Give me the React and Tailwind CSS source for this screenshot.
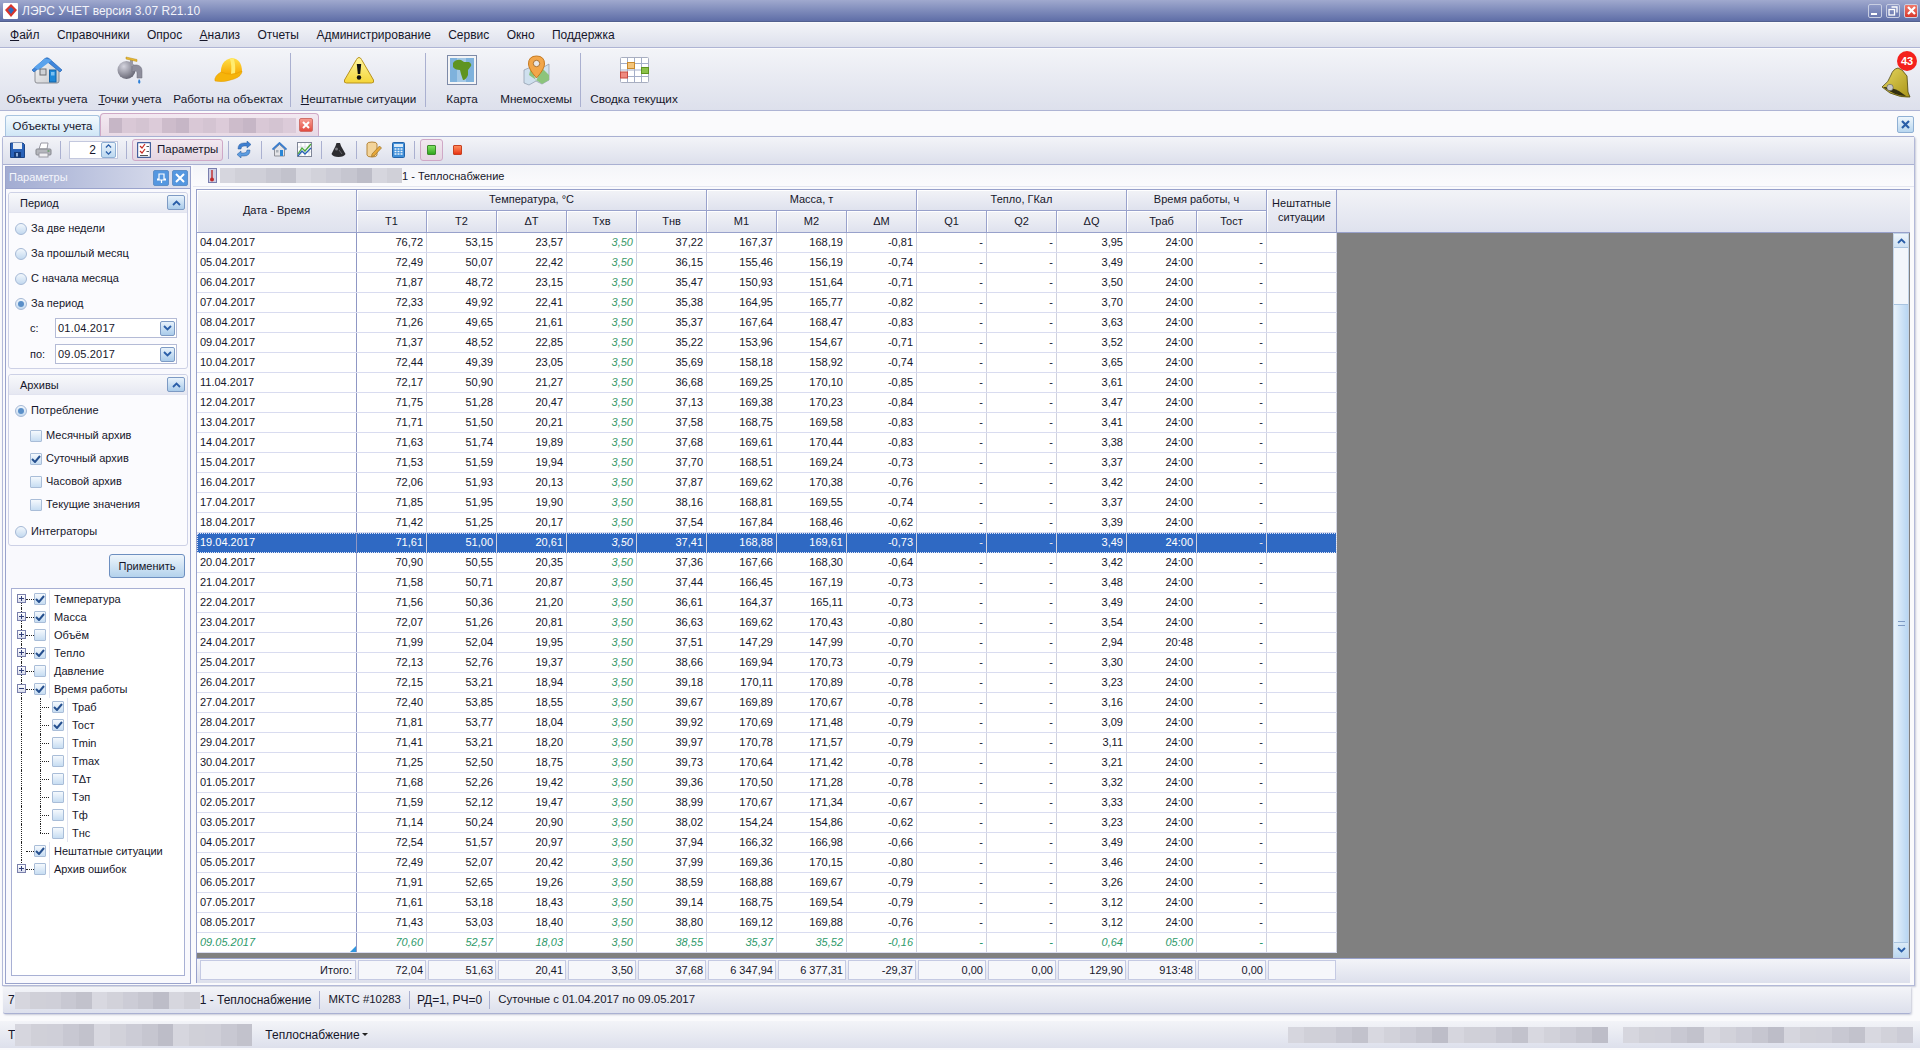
import React from 'react';

const rows = `04.04.2017 76,72 53,15 23,57 3,50 37,22 167,37 168,19 -0,81 - - 3,95 24:00 -
05.04.2017 72,49 50,07 22,42 3,50 36,15 155,46 156,19 -0,74 - - 3,49 24:00 -
06.04.2017 71,87 48,72 23,15 3,50 35,47 150,93 151,64 -0,71 - - 3,50 24:00 -
07.04.2017 72,33 49,92 22,41 3,50 35,38 164,95 165,77 -0,82 - - 3,70 24:00 -
08.04.2017 71,26 49,65 21,61 3,50 35,37 167,64 168,47 -0,83 - - 3,63 24:00 -
09.04.2017 71,37 48,52 22,85 3,50 35,22 153,96 154,67 -0,71 - - 3,52 24:00 -
10.04.2017 72,44 49,39 23,05 3,50 35,69 158,18 158,92 -0,74 - - 3,65 24:00 -
11.04.2017 72,17 50,90 21,27 3,50 36,68 169,25 170,10 -0,85 - - 3,61 24:00 -
12.04.2017 71,75 51,28 20,47 3,50 37,13 169,38 170,23 -0,84 - - 3,47 24:00 -
13.04.2017 71,71 51,50 20,21 3,50 37,58 168,75 169,58 -0,83 - - 3,41 24:00 -
14.04.2017 71,63 51,74 19,89 3,50 37,68 169,61 170,44 -0,83 - - 3,38 24:00 -
15.04.2017 71,53 51,59 19,94 3,50 37,70 168,51 169,24 -0,73 - - 3,37 24:00 -
16.04.2017 72,06 51,93 20,13 3,50 37,87 169,62 170,38 -0,76 - - 3,42 24:00 -
17.04.2017 71,85 51,95 19,90 3,50 38,16 168,81 169,55 -0,74 - - 3,37 24:00 -
18.04.2017 71,42 51,25 20,17 3,50 37,54 167,84 168,46 -0,62 - - 3,39 24:00 -
19.04.2017 71,61 51,00 20,61 3,50 37,41 168,88 169,61 -0,73 - - 3,49 24:00 -
20.04.2017 70,90 50,55 20,35 3,50 37,36 167,66 168,30 -0,64 - - 3,42 24:00 -
21.04.2017 71,58 50,71 20,87 3,50 37,44 166,45 167,19 -0,73 - - 3,48 24:00 -
22.04.2017 71,56 50,36 21,20 3,50 36,61 164,37 165,11 -0,73 - - 3,49 24:00 -
23.04.2017 72,07 51,26 20,81 3,50 36,63 169,62 170,43 -0,80 - - 3,54 24:00 -
24.04.2017 71,99 52,04 19,95 3,50 37,51 147,29 147,99 -0,70 - - 2,94 20:48 -
25.04.2017 72,13 52,76 19,37 3,50 38,66 169,94 170,73 -0,79 - - 3,30 24:00 -
26.04.2017 72,15 53,21 18,94 3,50 39,18 170,11 170,89 -0,78 - - 3,23 24:00 -
27.04.2017 72,40 53,85 18,55 3,50 39,67 169,89 170,67 -0,78 - - 3,16 24:00 -
28.04.2017 71,81 53,77 18,04 3,50 39,92 170,69 171,48 -0,79 - - 3,09 24:00 -
29.04.2017 71,41 53,21 18,20 3,50 39,97 170,78 171,57 -0,79 - - 3,11 24:00 -
30.04.2017 71,25 52,50 18,75 3,50 39,73 170,64 171,42 -0,78 - - 3,21 24:00 -
01.05.2017 71,68 52,26 19,42 3,50 39,36 170,50 171,28 -0,78 - - 3,32 24:00 -
02.05.2017 71,59 52,12 19,47 3,50 38,99 170,67 171,34 -0,67 - - 3,33 24:00 -
03.05.2017 71,14 50,24 20,90 3,50 38,02 154,24 154,86 -0,62 - - 3,23 24:00 -
04.05.2017 72,54 51,57 20,97 3,50 37,94 166,32 166,98 -0,66 - - 3,49 24:00 -
05.05.2017 72,49 52,07 20,42 3,50 37,99 169,36 170,15 -0,80 - - 3,46 24:00 -
06.05.2017 71,91 52,65 19,26 3,50 38,59 168,88 169,67 -0,79 - - 3,26 24:00 -
07.05.2017 71,61 53,18 18,43 3,50 39,14 168,75 169,54 -0,79 - - 3,12 24:00 -
08.05.2017 71,43 53,03 18,40 3,50 38,80 169,12 169,88 -0,76 - - 3,12 24:00 -
09.05.2017 70,60 52,57 18,03 3,50 38,55 35,37 35,52 -0,16 - - 0,64 05:00 -`
  .split('\n')
  .map((line) => line.split(' '));

const totals = ['72,04', '51,63', '20,41', '3,50', '37,68', '6 347,94', '6 377,31', '-29,37', '0,00', '0,00', '129,90', '913:48', '0,00', ''];

const cols = 'grid grid-cols-[160px_repeat(14,70px)]';
const bar = 'bg-gradient-to-b from-[#f3f4f8] to-[#dde0ec]';
const headCell = 'flex items-center justify-center text-center bg-gradient-to-b from-[#f2f3f7] to-[#dfe2ee] border-r border-b border-[#98a1cb] shadow-[inset_1px_1px_0_#fff]';

const greys = [
  'bg-[#d0d0d8]', 'bg-[#c2c2cc]', 'bg-[#ccccd6]', 'bg-[#d6d6de]', 'bg-[#c8c8d2]',
  'bg-[#d2d2da]', 'bg-[#bdbdc8]', 'bg-[#cfcfd8]', 'bg-[#d8d8e0]', 'bg-[#c6c6d0]',
];
const pinks = ['bg-[#d9c8d6]', 'bg-[#cdbccb]', 'bg-[#d4c4d2]', 'bg-[#c6b6c6]', 'bg-[#dccbd9]'];

function Blur({ className, cells = 12, palette = greys }) {
  return (
    <div className={`flex shrink-0 ${className}`}>
      {Array.from({ length: cells }, (_, i) => (
        <div key={i} className={`flex-1 ${palette[(i * 7 + 3) % palette.length]}`} />
      ))}
    </div>
  );
}

function Sep({ h = 'h-[50px]' }) {
  return <div className={`w-px shrink-0 bg-[#aab0d0] ${h}`} />;
}

function HouseIcon() {
  return (
    <svg width="32" height="27" viewBox="0 0 32 27">
      <defs>
        <linearGradient id="wallg" x1="0" y1="0" x2="1" y2="1">
          <stop offset="0" stopColor="#fafafa" />
          <stop offset="1" stopColor="#c4c6ca" />
        </linearGradient>
      </defs>
      <path d="M4 13 L16 3 L28 13 V24 Q28 26 26 26 H6 Q4 26 4 24Z" fill="url(#wallg)" stroke="#8c8e94" />
      <path d="M1 13 L14 1.500 Q16 0 18 1.500 L31 13 L29 15 L16 4.500 L3 15Z" fill="#3f86dc" stroke="#2565b5" strokeWidth="0.7" />
      <path d="M3 10.500 L14 1.500 L21 3 L8 13Z" fill="#5aa3ec" />
      <rect x="9" y="12" width="6" height="6" fill="#cfd2d6" stroke="#6f7175" />
      <rect x="18.500" y="13" width="6.500" height="12" fill="#1e88d8" stroke="#1565a8" />
      <rect x="20" y="15" width="3.500" height="3.500" fill="#7cc0f0" />
    </svg>
  );
}

function TapIcon() {
  return (
    <svg width="26" height="28" viewBox="0 0 26 28">
      <defs>
        <radialGradient id="tapg" cx="0.35" cy="0.3" r="0.8">
          <stop offset="0" stopColor="#d4d4de" />
          <stop offset="1" stopColor="#5d5d6b" />
        </radialGradient>
      </defs>
      <circle cx="9.500" cy="14" r="9" fill="url(#tapg)" />
      <path d="M15 9 H20 Q25 10 25 15 V22 H20 V16 Q19 14 15 16Z" fill="#8e8e9c" stroke="#6d6d7a" strokeWidth="0.5" />
      <rect x="13" y="4" width="3" height="6" fill="#9a9aa6" />
      <path d="M9 1 L20 3.500 L20 5.500 L9 3Z" fill="#e8b830" stroke="#b58a1a" strokeWidth="0.5" />
      <path d="M22 23 Q24.500 25.500 22.500 27.800 Q20 27 22 23Z" fill="#2c7fd8" />
    </svg>
  );
}

function HatIcon() {
  return (
    <svg width="29" height="26" viewBox="0 0 29 26">
      <defs>
        <linearGradient id="hatg" x1="0" y1="0" x2="0" y2="1">
          <stop offset="0" stopColor="#ffe04a" />
          <stop offset="1" stopColor="#f7a800" />
        </linearGradient>
      </defs>
      <path d="M7 17 Q6 3 18 1 Q28 2 28 15 Q22 19 7 17Z" fill="url(#hatg)" />
      <path d="M16 2 Q18 8 17 17 L21 16.500 Q22 8 19.500 1.200Z" fill="#ffec70" />
      <path d="M1 24 Q0 19 7 15 Q18 20 28 14 Q28 19 20 22 Q10 26 1 24Z" fill="#f6b40a" stroke="#e09a00" strokeWidth="0.5" />
    </svg>
  );
}

function WarnIcon() {
  return (
    <svg width="32" height="28" viewBox="0 0 32 28">
      <defs>
        <linearGradient id="warng" x1="0" y1="0" x2="0" y2="1">
          <stop offset="0" stopColor="#fff7a0" />
          <stop offset="1" stopColor="#f5d538" />
        </linearGradient>
      </defs>
      <path d="M16 1.500 Q17.500 1.500 18.500 3.500 L30.500 24 Q31.500 27 28.500 27 H3.500 Q0.500 27 1.500 24 L13.500 3.500 Q14.500 1.500 16 1.500Z" fill="url(#warng)" stroke="#b8921e" />
      <path d="M13.800 8 H18.200 L17.200 18 H14.800Z" fill="#111" />
      <circle cx="16" cy="21.500" r="2.200" fill="#111" />
    </svg>
  );
}

function MapIcon() {
  return (
    <svg width="30" height="30" viewBox="0 0 30 30">
      <rect x="0.500" y="0.500" width="29" height="29" fill="#f3f4f6" stroke="#7d8aa8" />
      <rect x="3" y="3" width="24" height="24" fill="#7fb2dc" />
      <rect x="10" y="3" width="9" height="24" fill="#a3c8e6" />
      <path d="M6 8 Q9 4 14 5 L17 7 L22 7 Q25 9 24 11 L21 15 L21 20 Q19 25 16 25 L14 19 L13 15 Q8 15 6 12Z" fill="#5f9420" />
    </svg>
  );
}

function PinIcon() {
  return (
    <svg width="27" height="31" viewBox="0 0 27 31">
      <path d="M1 15 L8 12 L19 13 L26 9 V25 L19 29 L13 26 L6 30 L1 28Z" fill="#cfe0ee" stroke="#8b97a8" strokeWidth="0.7" />
      <path d="M8 12 L13 26 L19 13 L26 20 V25 L19 29 L6 20Z" fill="#8cc47c" />
      <path d="M13.500 1 Q21.500 1 21.500 9 Q21.500 14 13.500 23 Q5.500 14 5.500 9 Q5.500 1 13.500 1Z" fill="#f2a64a" stroke="#c67a20" />
      <circle cx="13.500" cy="8.500" r="3.200" fill="#e8e8ea" stroke="#aa7030" />
    </svg>
  );
}

function GridIcon() {
  return (
    <svg width="29" height="26" viewBox="0 0 29 26">
      <rect x="0.500" y="0.500" width="28" height="25" rx="1" fill="#fff" stroke="#a8aec0" />
      <path d="M7.500 1 V25 M14.500 1 V25 M21.500 1 V25 M1 6.500 H28 M1 13 H28 M1 19.500 H28" stroke="#a4aec8" />
      <rect x="7.500" y="5.500" width="7" height="6" fill="#f4c47a" stroke="#c98a2c" />
      <rect x="21.500" y="10.500" width="7" height="6" fill="#8cc24a" stroke="#5f9420" />
      <rect x="0.500" y="15" width="7" height="6" fill="#ee8a80" stroke="#c84a40" />
    </svg>
  );
}

function BellIcon() {
  return (
    <svg width="30" height="32" viewBox="0 0 30 32">
      <defs>
        <linearGradient id="bellg" x1="0" y1="0" x2="1" y2="1">
          <stop offset="0" stopColor="#e8d860" />
          <stop offset="1" stopColor="#a89418" />
        </linearGradient>
      </defs>
      <path d="M17 2 L21 4 L26 10 L27 26 L29 31 Q20 32 9 27 L1 21 Q8 16 10 9 Q12 3 17 2Z" fill="url(#bellg)" stroke="#4e460c" strokeWidth="0.8" />
      <path d="M2 21 Q10 21 18 25 L25 30 Q14 30 2 21Z" fill="#332f10" />
      <circle cx="9" cy="21.500" r="3.200" fill="#c8c8c8" stroke="#444" strokeWidth="0.5" />
    </svg>
  );
}

function SaveIcon() {
  return (
    <svg width="15" height="16" viewBox="0 0 15 16">
      <path d="M0.500 1 H13 L14.500 2.500 V15.500 H0.500Z" fill="#2a62b8" stroke="#1c4688" />
      <rect x="3" y="1" width="9" height="6" fill="#e8eef6" />
      <rect x="4" y="10" width="7" height="5.500" fill="#163a78" />
      <rect x="6" y="11" width="2" height="3.500" fill="#8fb0dc" />
    </svg>
  );
}

function PrintIcon() {
  return (
    <svg width="17" height="16" viewBox="0 0 17 16">
      <path d="M4 7 L6 1 H13 L12 7Z" fill="#fff" stroke="#9a9aa4" />
      <rect x="1" y="7" width="15" height="6" rx="1" fill="#b4b6bc" stroke="#85878e" />
      <rect x="4" y="11" width="9" height="4" fill="#efeff2" stroke="#9a9aa4" />
      <rect x="12.500" y="8.500" width="2" height="1" fill="#3c8a3c" />
    </svg>
  );
}

function ParamsIcon() {
  return (
    <svg width="14" height="16" viewBox="0 0 14 16">
      <rect x="0.500" y="0.500" width="13" height="15" rx="1" fill="#fff" stroke="#44609c" strokeWidth="1.400" />
      <path d="M3 4 L5 6 L8 2 M3 9 L5 11 L8 7" stroke="#c42a22" strokeWidth="1.200" fill="none" />
      <path d="M9.500 4.500 H12 M9.500 9.500 H12 M3 13.500 H11" stroke="#555" />
    </svg>
  );
}

function RefreshIcon() {
  return (
    <svg width="16" height="17" viewBox="0 0 16 17">
      <path d="M2 8 Q2 2 8 2 L11 2 L11 0 L15 3.500 L11 7 L11 5 L8 5 Q5 5 5 8Z" fill="#3f7fd0" stroke="#24589c" strokeWidth="0.5" />
      <path d="M14 9 Q14 15 8 15 L5 15 L5 17 L1 13.500 L5 10 L5 12 L8 12 Q11 12 11 9Z" fill="#5c9ce0" stroke="#24589c" strokeWidth="0.5" />
    </svg>
  );
}

function SmallHome() {
  return (
    <svg width="15" height="15" viewBox="0 0 15 15">
      <path d="M2.500 7 L7.500 2.500 L12.500 7 V14 H2.500Z" fill="#e4e4e8" stroke="#8e9098" />
      <path d="M0.500 7.500 L7.500 1 L14.500 7.500" fill="none" stroke="#3a7ccc" strokeWidth="1.800" />
      <rect x="8" y="8" width="3" height="6" fill="#2a86d6" />
      <rect x="4" y="8" width="2.500" height="2.500" fill="#aab0b8" />
    </svg>
  );
}

function ChartIcon() {
  return (
    <svg width="15" height="15" viewBox="0 0 15 15">
      <rect x="0.500" y="0.500" width="14" height="14" fill="#fff" stroke="#7f8698" />
      <path d="M4 1 V14 M8 1 V14 M12 1 V14 M1 5 H14 M1 10 H14" stroke="#c7ccd8" strokeWidth="0.6" />
      <path d="M1 12 L5 6 L8 9 L14 2" fill="none" stroke="#4aa83a" strokeWidth="1.300" />
      <path d="M1 14 L5 9 L8 12 L14 6" fill="none" stroke="#2862b4" strokeWidth="1.300" />
    </svg>
  );
}

function WeightIcon() {
  return (
    <svg width="15" height="15" viewBox="0 0 15 15">
      <path d="M5.500 1 H9 L10 4 L14.500 12 Q13 15 7.500 15 Q2 15 0.500 12 L4.500 4Z" fill="#2c2c30" />
      <circle cx="5.500" cy="7" r="1.500" fill="#77777d" />
      <path d="M8 8 L11 12" stroke="#66666c" />
    </svg>
  );
}

function NoteIcon() {
  return (
    <svg width="16" height="17" viewBox="0 0 16 17">
      <path d="M1 3 Q1 1 6 1 Q11 1 11 3 V14 Q11 16 6 16 Q1 16 1 14Z" fill="#f3d49a" stroke="#b5853a" />
      <path d="M6 13 L13.500 5 L15.500 7 L8 15 L5.500 15.500Z" fill="#e8a838" stroke="#8c6420" strokeWidth="0.6" />
    </svg>
  );
}

function CalcIcon() {
  return (
    <svg width="13" height="16" viewBox="0 0 13 16">
      <rect x="0.500" y="0.500" width="12" height="15" rx="1" fill="#3f8ed8" stroke="#2262a8" />
      <rect x="2" y="2" width="9" height="3" fill="#d8eaf8" />
      <path d="M2.500 7 H4.500 M5.500 7 H7.500 M8.500 7 H10.500 M2.500 9.500 H4.500 M5.500 9.500 H7.500 M8.500 9.500 H10.500 M2.500 12 H4.500 M5.500 12 H7.500 M8.500 12 H10.500" stroke="#eef6fc" strokeWidth="1.400" />
    </svg>
  );
}

function Chevron({ up, className = '' }) {
  return (
    <svg width="9" height="6" viewBox="0 0 9 6" className={className}>
      <path d={up ? 'M1 5 L4.500 1.500 L8 5' : 'M1 1 L4.500 4.500 L8 1'} fill="none" stroke="#2a5ea8" strokeWidth="1.800" />
    </svg>
  );
}

function ToolButton({ icon, w, children }) {
  return (
    <div className={`flex flex-col items-center shrink-0 ${w}`}>
      <div className="h-[38px] flex items-center justify-center">{icon}</div>
      <div className="mt-[2px] whitespace-nowrap text-[11.700px] leading-[16px]">{children}</div>
    </div>
  );
}

function WinButton({ color, children }) {
  return (
    <div className={`w-[14px] h-[14px] rounded-[2px] border border-[#c8cee2] flex items-center justify-center ${color}`}>
      {children}
    </div>
  );
}

function Radio({ on, children }) {
  return (
    <div className="flex items-center gap-[4px] h-[25px]">
      <div className="w-[12px] h-[12px] rounded-full border border-[#a5b9d6] bg-gradient-to-b from-[#f2f7fc] to-[#c3d9ef] flex items-center justify-center">
        {on && <div className="w-[6px] h-[6px] rounded-full bg-[#5a8fc8]" />}
      </div>
      <span>{children}</span>
    </div>
  );
}

function Box({ on }) {
  return (
    <div className="w-[12px] h-[12px] shrink-0 rounded-[1px] border border-[#a9bdd8] bg-gradient-to-b from-[#f5f9fd] to-[#c7ddf2] flex items-center justify-center">
      {on && (
        <svg width="10" height="8" viewBox="0 0 10 8">
          <path d="M1 4 L4 7 L9 1" fill="none" stroke="#26508f" strokeWidth="2" />
        </svg>
      )}
    </div>
  );
}

function CheckRow({ on, children }) {
  return (
    <div className="flex items-center gap-[4px] h-[23px] pl-[15px]">
      <Box on={on} />
      <span>{children}</span>
    </div>
  );
}

function GroupHead({ children }) {
  return (
    <div className="h-[20px] flex items-center justify-between pl-[11px] pr-[2px] bg-gradient-to-b from-[#f8f9fb] to-[#e6e8f2] border-b border-[#e2e4f0] rounded-t-[3px]">
      <span className="pt-px">{children}</span>
      <div className="w-[18px] h-[15px] rounded-[2px] border border-[#7d9ac4] bg-gradient-to-b from-[#e8f2fb] to-[#a9cbea] flex items-center justify-center">
        <Chevron up />
      </div>
    </div>
  );
}

function DateInput({ label, value }) {
  return (
    <div className="flex items-center h-[20px] pl-[21px]">
      <span className="w-[25px]">{label}</span>
      <div className="w-[122px] h-[20px] bg-white border border-[#b4bbd6] flex items-center justify-between pl-[2px] pr-[1px] tracking-[0.2px]">
        <span>{value}</span>
        <div className="w-[15px] h-[15px] rounded-[2px] border border-[#7d9ac4] bg-gradient-to-b from-[#e8f2fb] to-[#a9cbea] flex items-center justify-center">
          <Chevron />
        </div>
      </div>
    </div>
  );
}

function Expander({ open }) {
  return (
    <div className="absolute left-0 top-[4px] w-[9px] h-[9px] border border-[#7a80ac] bg-gradient-to-b from-white to-[#d8dcec] flex items-center justify-center">
      <div className="relative w-[5px] h-px bg-[#33407a]" />
      {!open && <div className="absolute w-px h-[5px] bg-[#33407a]" />}
    </div>
  );
}

function TreeRow({ label, on, exp, open, first, last, child, lastChild }) {
  return (
    <div className="flex items-center h-[18px] pl-[5px]">
      <div className="relative w-[9px] h-full shrink-0">
        <div className={`absolute left-[4px] border-l border-dotted border-[#222] ${first ? 'top-[9px] bottom-0' : last ? 'top-0 bottom-[9px]' : 'top-0 bottom-0'}`} />
        {exp && <Expander open={open} />}
      </div>
      {child ? (
        <>
          <div className="w-[14px] shrink-0" />
          <div className="relative w-[12px] h-full shrink-0">
            <div className={`absolute left-0 border-l border-dotted border-[#222] ${lastChild ? 'top-0 bottom-[9px]' : 'top-0 bottom-0'}`} />
            <div className="absolute left-0 right-[3px] top-[9px] border-t border-dotted border-[#222]" />
          </div>
        </>
      ) : (
        <div className="w-[8px] h-px shrink-0 border-t border-dotted border-[#222]" />
      )}
      <Box on={on} />
      <div className="w-px h-full bg-[#e0e3f0] ml-[3px] mr-[4px]" />
      <span className="whitespace-nowrap">{label}</span>
    </div>
  );
}

function DataRow({ r }) {
  const selected = r[0] === '19.04.2017';
  const today = r[0] === '09.05.2017';
  const base = selected ? 'bg-[#2f69c3] text-white' : today ? 'bg-white text-[#2f9a6c] italic' : 'bg-white';
  return (
    <div className={`${cols} h-[20px] leading-[19px] ${base} ${selected ? 'outline-1 -outline-offset-1 outline-dotted outline-[#dfe6f6]' : 'border-b border-[#d9dcf0]'}`}>
      {[...r, ''].map((v, i) => {
        const green = i === 4 && !selected;
        return (
          <div
            key={i}
            className={`h-full whitespace-nowrap ${i === 0 ? 'relative pl-[3px] border-r border-[#8f97c4]' : 'text-right pr-[3px] border-r border-[#d0d2e0]'} ${green ? 'italic text-[#3a9a6a]' : ''} ${i === 4 && selected ? 'italic' : ''}`}
          >
            {v}
            {i === 0 && today && (
              <svg width="6" height="6" viewBox="0 0 6 6" className="absolute right-0 bottom-0">
                <path d="M6 0 V6 H0Z" fill="#2f97e0" />
              </svg>
            )}
          </div>
        );
      })}
    </div>
  );
}

export default function App() {
  return (
    <div className="w-[1920px] h-[1050px] overflow-hidden flex flex-col bg-[#fafafc] text-[#16162a] text-[11px] font-['Liberation_Sans',sans-serif]">
      {/* title bar */}
      <div className="h-[22px] shrink-0 flex items-center pl-[3px] pr-[2px] bg-gradient-to-b from-[#a0a9ce] to-[#5f6ea7] border-b border-[#52608f]">
        <div className="w-[15px] h-[16px] bg-white rounded-[1px] flex items-center justify-center">
          <svg width="12" height="13" viewBox="0 0 12 13">
            <path d="M6 0 L12 6 L6 13 L0 6Z" fill="#d8342c" />
            <path d="M6 3 L9 6 L6 10 L3 6Z" fill="#2a6cc0" />
          </svg>
        </div>
        <span className="ml-[4px] text-[#f2f3fa] text-[12px]">ЛЭРС УЧЕТ версия 3.07 R21.10</span>
        <div className="ml-auto flex items-center gap-[4px]">
          <WinButton color="bg-gradient-to-b from-[#8f9ac6] to-[#6b79b0]">
            <div className="w-[6px] h-[2px] bg-white mt-[6px] mr-[3px]" />
          </WinButton>
          <WinButton color="bg-gradient-to-b from-[#8f9ac6] to-[#6b79b0]">
            <svg width="10" height="10" viewBox="0 0 10 10">
              <rect x="1" y="3.500" width="5.500" height="5.500" fill="none" stroke="#fff" strokeWidth="1.300" />
              <path d="M3.500 1 H9 V6.500" fill="none" stroke="#fff" strokeWidth="1.300" />
            </svg>
          </WinButton>
          <WinButton color="bg-gradient-to-b from-[#f0786a] to-[#d8362c]">
            <svg width="9" height="9" viewBox="0 0 9 9">
              <path d="M1 1 L8 8 M8 1 L1 8" stroke="#fff" strokeWidth="2.200" />
            </svg>
          </WinButton>
        </div>
      </div>

      {/* menu */}
      <div className={`mt-px h-[25px] shrink-0 flex items-center gap-[17.400px] pl-[10px] text-[12px] ${bar} border-b border-[#aeb4d4]`}>
        <span><u>Ф</u>айл</span>
        <span>Справочники</span>
        <span>Опрос</span>
        <span><u>А</u>нализ</span>
        <span>Отчеты</span>
        <span>Администрирование</span>
        <span>Сервис</span>
        <span>Окно</span>
        <span>Поддержка</span>
      </div>

      {/* main toolbar */}
      <div className={`relative mt-px h-[62px] shrink-0 flex items-start pt-[2px] pl-[2px] ${bar} border-b border-[#aeb4d4]`}>
        <ToolButton w="w-[90px]" icon={<HouseIcon />}>Объекты учета</ToolButton>
        <ToolButton w="w-[76px]" icon={<TapIcon />}><u>Т</u>очки учета</ToolButton>
        <ToolButton w="w-[120px]" icon={<HatIcon />}>Работы на объектах</ToolButton>
        <div className="mx-[2px] mt-[2px]"><Sep h="h-[54px]" /></div>
        <ToolButton w="w-[131px]" icon={<WarnIcon />}><u>Н</u>ештатные ситуации</ToolButton>
        <div className="mx-[1px] mt-[2px]"><Sep h="h-[54px]" /></div>
        <ToolButton w="w-[70px]" icon={<MapIcon />}>Карта</ToolButton>
        <ToolButton w="w-[78px]" icon={<PinIcon />}>Мнемосхемы</ToolButton>
        <div className="ml-[5px] mr-[1px] mt-[2px]"><Sep h="h-[54px]" /></div>
        <ToolButton w="w-[104px]" icon={<GridIcon />}>Сводка текущих</ToolButton>
        <div className="absolute left-[1881px] top-[17px]"><BellIcon /></div>
        <div className="absolute left-[1897px] top-[2px] w-[20px] h-[20px] rounded-full bg-[#f4201c] text-white text-[11px] font-bold flex items-center justify-center">43</div>
      </div>

      {/* tabs */}
      <div className="mt-px h-[24px] shrink-0 flex items-end pl-[5px] pr-[6px]">
        <div className="h-[21px] w-[95px] flex items-center justify-center pt-px rounded-t-[3px] border border-b-0 border-[#a8c4e0] bg-gradient-to-b from-[#f4fafe] to-[#cfe6f6] text-[11.500px]">
          Объекты учета
        </div>
        <div className="h-[23px] w-[219px] flex items-center pl-[8px] rounded-t-[4px] border border-b-0 border-[#cfa8c6] bg-gradient-to-b from-[#f3e9f1] to-[#e8d9e5]">
          <Blur className="w-[187px] h-[15px]" cells={14} palette={pinks} />
          <div className="ml-[3px] w-[14px] h-[14px] rounded-[2px] border border-[#d0706a] bg-gradient-to-b from-[#f79a90] to-[#e24a40] flex items-center justify-center">
            <svg width="8" height="8" viewBox="0 0 8 8">
              <path d="M1 1 L7 7 M7 1 L1 7" stroke="#fff" strokeWidth="2" />
            </svg>
          </div>
        </div>
        <div className="ml-auto mb-[3px] w-[17px] h-[17px] rounded-[2px] border border-[#8fb0d4] bg-gradient-to-b from-[#eef6fc] to-[#b8d6ef] flex items-center justify-center">
          <svg width="9" height="9" viewBox="0 0 9 9">
            <path d="M1 1 L8 8 M8 1 L1 8" stroke="#2a5ea8" strokeWidth="2.200" />
          </svg>
        </div>
      </div>

      {/* document */}
      <div className="flex-none w-[1913px] ml-[2px] rounded-t-[3px] border-x border-b border-[#b3b9d8] shadow-[1px_1px_2px_#c8cbd8] flex flex-col bg-[#fafafc]">
        {/* doc toolbar */}
        <div className={`h-[29px] shrink-0 flex items-center pl-[7px] pb-[2px] ${bar} border-y border-[#a9b0d2]`}>
          <div className="w-[15px] flex justify-center"><SaveIcon /></div>
          <div className="ml-[10px] w-[17px] flex justify-center"><PrintIcon /></div>
          <div className="ml-[8px]"><Sep h="h-[18px]" /></div>
          <div className="ml-[8px] w-[49px] h-[18px] bg-white border border-[#c3c8de] flex items-center justify-end pr-px">
            <span className="mr-[5px] text-[12px]">2</span>
            <div className="w-[15px] h-[16px] rounded-[2px] border border-[#8fb0d4] bg-gradient-to-b from-[#eaf3fb] to-[#bcd8f0] flex flex-col items-center justify-center gap-[1px]">
              <Chevron up className="scale-75" />
              <Chevron className="scale-75" />
            </div>
          </div>
          <div className="ml-[8px]"><Sep h="h-[18px]" /></div>
          <div className="ml-[5px] w-[91px] h-[22px] rounded-[3px] border border-[#cfa8c6] bg-gradient-to-b from-[#f2e8f0] to-[#e4d6e2] flex items-center pl-[4px] gap-[6px] text-[11.500px]">
            <ParamsIcon />
            <span>Параметры</span>
          </div>
          <div className="ml-[5px]"><Sep h="h-[18px]" /></div>
          <div className="ml-[7px]"><RefreshIcon /></div>
          <div className="ml-[9px]"><Sep h="h-[18px]" /></div>
          <div className="ml-[10px]"><SmallHome /></div>
          <div className="ml-[10px]"><ChartIcon /></div>
          <div className="ml-[9px]"><Sep h="h-[18px]" /></div>
          <div className="ml-[9px]"><WeightIcon /></div>
          <div className="ml-[10px]"><Sep h="h-[18px]" /></div>
          <div className="ml-[9px]"><NoteIcon /></div>
          <div className="ml-[10px]"><CalcIcon /></div>
          <div className="ml-[9px]"><Sep h="h-[18px]" /></div>
          <div className="ml-[5px] w-[23px] h-[22px] rounded-[3px] border border-[#cfa8c6] bg-gradient-to-b from-[#f2e8f0] to-[#e4d6e2] flex items-center justify-center">
            <div className="w-[9px] h-[10px] rounded-[1px] bg-gradient-to-b from-[#7fe060] to-[#2fa81c] border border-[#3c8a2c]" />
          </div>
          <div className="ml-[10px] w-[9px] h-[10px] rounded-[1px] bg-gradient-to-b from-[#ff8a5a] to-[#e83010] border border-[#c84020]" />
        </div>

        <div className="h-[820px] shrink-0 flex">
          {/* left panel */}
          <div className="w-[186px] shrink-0 ml-[2px] mt-px mb-px border border-[#9aa3cc] flex flex-col bg-[#f9f9fd]">
            <div className="h-[22px] shrink-0 flex items-center justify-between pl-[3px] pr-[2px] bg-gradient-to-r from-[#a2acd2] to-[#dfe2ef] border-b border-[#9aa3cc] text-[#f4f5fb]">
              <span>Параметры</span>
              <div className="flex gap-[3px]">
                <div className="w-[16px] h-[16px] rounded-[2px] border border-[#5f8fc8] bg-[#5497e0] flex items-center justify-center">
                  <svg width="9" height="10" viewBox="0 0 9 10">
                    <path d="M2 1 H7 V6 H8.500 V7 H0.500 V6 H2Z M4.500 7 V10" fill="none" stroke="#fff" strokeWidth="1.200" />
                  </svg>
                </div>
                <div className="w-[16px] h-[16px] rounded-[2px] border border-[#5f8fc8] bg-[#5497e0] flex items-center justify-center">
                  <svg width="10" height="10" viewBox="0 0 10 10">
                    <path d="M1 1 L9 9 M9 1 L1 9" stroke="#fff" strokeWidth="2" />
                  </svg>
                </div>
              </div>
            </div>

            <div className="mx-[2px] mt-[3px] h-[177px] shrink-0 rounded-[3px] border border-[#cdd1e6] bg-[#fbfbfe]">
              <GroupHead>Период</GroupHead>
              <div className="pt-[3px] pl-[6px]">
                <Radio>За две недели</Radio>
                <Radio>За прошлый месяц</Radio>
                <Radio>С начала месяца</Radio>
                <Radio on>За период</Radio>
              </div>
              <div className="mt-[2px]"><DateInput label="с:" value="01.04.2017" /></div>
              <div className="mt-[6px]"><DateInput label="по:" value="09.05.2017" /></div>
            </div>

            <div className="mx-[2px] mt-[5px] h-[172px] shrink-0 rounded-[3px] border border-[#cdd1e6] bg-[#fbfbfe]">
              <GroupHead>Архивы</GroupHead>
              <div className="pt-[3px] pl-[6px]">
                <Radio on>Потребление</Radio>
                <div className="mt-[1px]"><CheckRow>Месячный архив</CheckRow></div>
                <CheckRow on>Суточный архив</CheckRow>
                <CheckRow>Часовой архив</CheckRow>
                <CheckRow>Текущие значения</CheckRow>
                <div className="mt-[3px]"><Radio>Интеграторы</Radio></div>
              </div>
            </div>

            <div className="mt-[8px] mr-[5px] self-end w-[76px] h-[24px] rounded-[3px] border border-[#6d8fc0] bg-gradient-to-b from-[#eef5fb] to-[#b4d2ec] flex items-center justify-center">
              Применить
            </div>

            <div className="mx-[5px] mt-[10px] mb-[7px] flex-1 border border-[#a8b0d4] bg-white pt-[1px]">
              <TreeRow first exp on label="Температура" />
              <TreeRow exp on label="Масса" />
              <TreeRow exp label="Объём" />
              <TreeRow exp on label="Тепло" />
              <TreeRow exp label="Давление" />
              <TreeRow exp open on label="Время работы" />
              <TreeRow child on label="Траб" />
              <TreeRow child on label="Тост" />
              <TreeRow child label="Tmin" />
              <TreeRow child label="Tmax" />
              <TreeRow child label="TΔт" />
              <TreeRow child label="Тэп" />
              <TreeRow child label="Тф" />
              <TreeRow child lastChild label="Тнс" />
              <TreeRow on label="Нештатные ситуации" />
              <TreeRow last exp label="Архив ошибок" />
            </div>
          </div>

          {/* right side */}
          <div className="flex-1 ml-[2px] min-w-0 flex flex-col">
            <div className="h-[22px] shrink-0 flex items-center pl-[15px] bg-gradient-to-b from-[#f4f5f9] to-[#fbfbfd] border-b border-[#e4e6f0]">
              <svg width="9" height="15" viewBox="0 0 9 15" className="shrink-0">
                <rect x="0.500" y="0.500" width="8" height="14" fill="#cfd0e4" stroke="#7a7eae" />
                <path d="M4 2 V10" stroke="#c02a2a" strokeWidth="1.400" />
                <circle cx="4" cy="11.500" r="2" fill="#c02a2a" />
              </svg>
              <Blur className="ml-[3px] w-[182px] h-[15px]" cells={12} />
              <span className="pt-[2px]">1 - Теплоснабжение</span>
            </div>

            <div className="mt-[2px] ml-[3px] w-[1714px] border-t border-l border-[#98a1cb] flex flex-col">
              {/* grid header */}
              <div className={`${cols} grid-rows-[21px_22px] relative bg-gradient-to-b from-[#f2f3f7] to-[#dfe2ee] border-b border-[#98a1cb] h-[43px]`}>
                <div className={`${headCell} row-span-2 pb-[2px]`}>Дата - Время</div>
                <div className={`${headCell} col-span-5 pb-[2px]`}>Температура, °C</div>
                <div className={`${headCell} col-span-3 pb-[2px]`}>Масса, т</div>
                <div className={`${headCell} col-span-3 pb-[2px]`}>Тепло, ГКал</div>
                <div className={`${headCell} col-span-2 pb-[2px]`}>Время работы, ч</div>
                <div className={`${headCell} row-span-2 pb-[2px] leading-[14px]`}>Нештатные<br />ситуации</div>
                {['T1', 'T2', 'ΔT', 'Tхв', 'Tнв', 'M1', 'M2', 'ΔM', 'Q1', 'Q2', 'ΔQ', 'Траб', 'Тост'].map((h) => (
                  <div key={h} className={headCell}>{h}</div>
                ))}
              </div>

              {/* grid body */}
              <div className="h-[725px] flex bg-[#808080]">
                <div className="w-[1140px] shrink-0">
                  {rows.map((r) => (
                    <DataRow key={r[0]} r={r} />
                  ))}
                </div>
                <div className="ml-auto mr-px w-[16px] flex flex-col bg-[#f2f6fb] border border-[#c2d4e8]">
                  <div className="h-[14px] shrink-0 bg-gradient-to-b from-[#eef5fb] to-[#cfe2f3] border-b border-[#a9c4e0] flex items-center justify-center">
                    <Chevron up />
                  </div>
                  <div className="h-[56px] shrink-0" />
                  <div className="flex-1 bg-gradient-to-r from-[#e8f2fb] to-[#b8d6f2] border-y border-[#a9c4e0] flex items-center justify-center">
                    <div className="w-[7px] h-[5px] border-y border-[#7d9ac4]" />
                  </div>
                  <div className="h-[14px] shrink-0 bg-gradient-to-b from-[#dcebf7] to-[#bcd8f0] flex items-center justify-center">
                    <Chevron />
                  </div>
                </div>
              </div>

              {/* totals */}
              <div className={`h-[25px] flex items-start pt-px pl-[3px] ${bar} border-t border-[#98a1cb]`}>
                <div className="w-[156px] h-[20px] mr-[2px] shrink-0 flex items-center justify-end pr-[3px] bg-[#f6f7fb] border border-[#c5cae3]">Итого:</div>
                {totals.map((t, i) => (
                  <div key={i} className="w-[68px] h-[20px] mr-[2px] shrink-0 flex items-center justify-end pr-[2px] bg-[#f6f7fb] border border-[#c5cae3]">{t}</div>
                ))}
              </div>
            </div>
          </div>
        </div>
      </div>

      {/* status bar */}
      <div className={`mt-px ml-[3px] w-[1908px] h-[27px] shrink-0 flex items-center pl-[5px] ${bar} border-b border-[#a9b0d2] rounded-b-[2px] shadow-[1px_1px_2px_#c8cbd8] text-[12px]`}>
        <span>7</span>
        <Blur className="w-[185px] h-[17px]" cells={12} />
        <span className="whitespace-nowrap">1 - Теплоснабжение</span>
        <div className="ml-[8px]"><Sep h="h-[18px]" /></div>
        <span className="ml-[8px] text-[11.400px] whitespace-nowrap">МКТС #10283</span>
        <div className="ml-[8px]"><Sep h="h-[18px]" /></div>
        <span className="ml-[7px] whitespace-nowrap">РД=1, РЧ=0</span>
        <div className="ml-[7px]"><Sep h="h-[18px]" /></div>
        <span className="ml-[8px] text-[11.400px] whitespace-nowrap">Суточные с 01.04.2017 по 09.05.2017</span>
      </div>

      {/* bottom bar */}
      <div className={`mt-[7px] h-[27px] shrink-0 flex items-center pl-[8px] ${bar} text-[12px]`}>
        <span>Т</span>
        <Blur className="w-[237px] h-[22px]" cells={15} />
        <span className="ml-[13px] whitespace-nowrap">Теплоснабжение</span>
        <svg width="6" height="3" viewBox="0 0 6 3" className="ml-[2px]">
          <path d="M0 0 H6 L3 3Z" fill="#222" />
        </svg>
        <Blur className="ml-auto w-[320px] h-[16px]" cells={20} />
        <Blur className="ml-[15px] mr-[7px] w-[290px] h-[16px]" cells={18} />
      </div>
    </div>
  );
}
